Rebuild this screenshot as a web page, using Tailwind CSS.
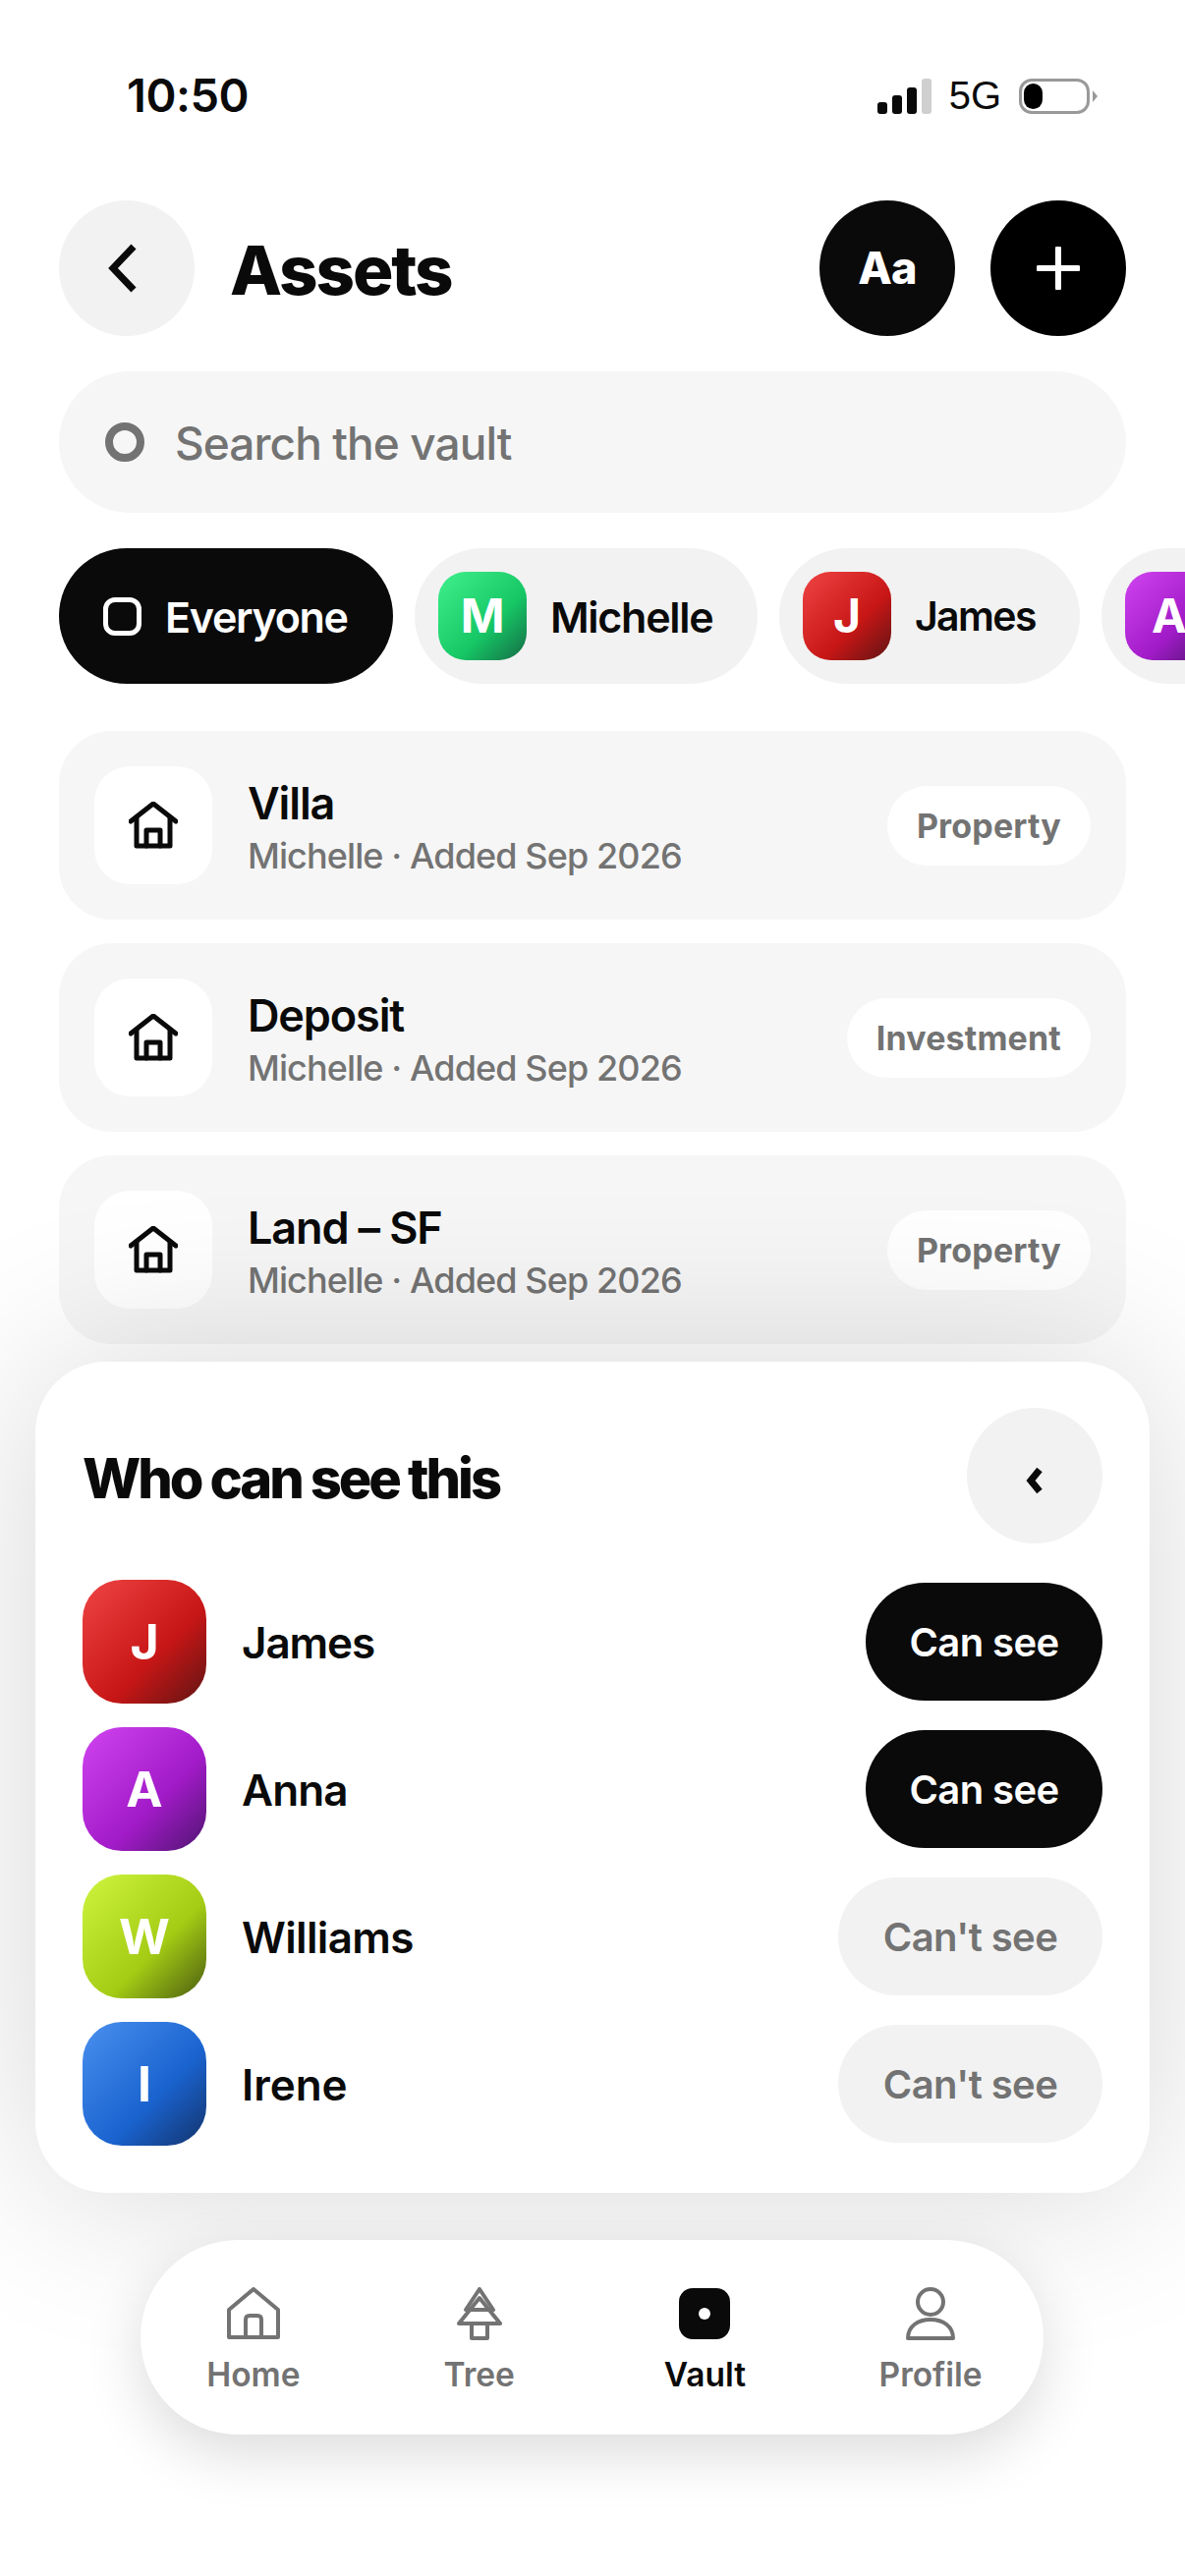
<!doctype html>
<html><head><meta charset="utf-8"><script src="https://cdn.jsdelivr.net/npm/@tailwindcss/browser@4"></script></head>
<body>
<div class="relative w-[1206px] h-[2622px] overflow-hidden bg-white font-['Inter',sans-serif] text-[#0a0a0a]">
  <div class="h-[204px] pt-[70px] pl-[129px] pr-[89px] flex justify-between items-start">
    <div class="text-[47px] leading-[54px] font-semibold tracking-[-0.01em]">10:50</div>
    <div class="flex items-end gap-[18px] h-[46px] pt-[8px]">
      <div class="flex items-end gap-[5px] h-[36px]">
        <div class="w-[10px] h-[12px] rounded-[3px] bg-[#0a0a0a]"></div>
        <div class="w-[10px] h-[19px] rounded-[3px] bg-[#0a0a0a]"></div>
        <div class="w-[10px] h-[27px] rounded-[3px] bg-[#0a0a0a]"></div>
        <div class="w-[10px] h-[36px] rounded-[3px] bg-[#cfcfcf]"></div>
      </div>
      <div class="text-[40px] leading-[38px] font-['Liberation_Sans',sans-serif]">5G</div>
      <div class="flex items-center gap-[3px]">
        <div class="w-[72px] h-[36px] rounded-[13px] border-[3px] border-[#999] p-[2px]"><div class="w-[19px] h-full rounded-[10px] bg-black"></div></div>
        <svg width="5" height="12" viewBox="0 0 5 12"><path d="M0 0L5 6L0 12Z" fill="#999"/></svg>
      </div>
    </div>
  </div>

  <div class="px-[60px] flex items-center h-[138px]">
    <div class="w-[138px] h-[138px] rounded-full bg-[#f2f2f2] flex items-center justify-center">
      <svg class="mr-[8px]" width="32" height="50" viewBox="0 0 32 50" fill="none"><path d="M27 3L6 25L27 47" stroke="#0a0a0a" stroke-width="7"/></svg>
    </div>
    <div class="ml-[36px] pt-[4px] text-[69px] font-extrabold tracking-[-0.03em] leading-none">Assets</div>
    <div class="ml-auto w-[138px] h-[138px] rounded-full bg-[#0a0a0a] text-white text-[45px] font-extrabold tracking-[-0.02em] flex items-center justify-center">Aa</div>
    <div class="ml-[36px] w-[138px] h-[138px] rounded-full bg-black flex items-center justify-center">
      <svg width="44" height="44" viewBox="0 0 44 44"><path d="M22 2V42M2 22H42" stroke="#fff" stroke-width="6" stroke-linecap="round"/></svg>
    </div>
  </div>

  <div class="mt-[36px] mx-[60px] h-[144px] rounded-full bg-[#f6f6f6] flex items-center pl-[47px]">
    <div class="w-[40px] h-[40px] rounded-full border-[8px] border-[#737373]"></div>
    <div class="ml-[31px] pt-[2px] text-[46px] font-medium text-[#737373] tracking-[-0.02em]">Search the vault</div>
  </div>

  <div class="mt-[36px] pl-[60px] flex gap-[22px] w-[1206px] overflow-hidden">
    <div class="shrink-0 w-[340px] h-[138px] rounded-full bg-[#0a0a0a] flex items-center pl-[45px]">
      <div class="w-[39px] h-[39px] rounded-[12px] border-[5px] border-white"></div>
      <div class="ml-[24px] pt-[2px] text-white text-[43px] font-semibold tracking-[-0.03em]">Everyone</div>
    </div>
    <div class="shrink-0 w-[349px] h-[138px] rounded-full bg-[#f2f2f2] flex items-center pl-[24px]">
      <div class="w-[90px] h-[90px] rounded-[28px] bg-[linear-gradient(135deg,#3ff08c,#16c765_60%,#156b45)] text-white text-[48px] font-bold flex items-center justify-center">M</div>
      <div class="ml-[24px] pt-[2px] text-[43px] font-semibold tracking-[-0.03em]">Michelle</div>
    </div>
    <div class="shrink-0 w-[306px] h-[138px] rounded-full bg-[#f2f2f2] flex items-center pl-[24px]">
      <div class="w-[90px] h-[90px] rounded-[28px] bg-[linear-gradient(135deg,#ef4444,#c81616_60%,#5f1414)] text-white text-[48px] font-bold flex items-center justify-center">J</div>
      <div class="ml-[24px] pt-[2px] text-[41px] font-semibold tracking-[-0.04em]">James</div>
    </div>
    <div class="shrink-0 w-[306px] h-[138px] rounded-full bg-[#f2f2f2] flex items-center pl-[24px]">
      <div class="w-[90px] h-[90px] rounded-[28px] bg-[linear-gradient(135deg,#d044f0,#a21bc8_60%,#4f1470)] text-white text-[48px] font-bold flex items-center justify-center">A</div>
      <div class="ml-[24px] pt-[2px] text-[43px] font-semibold tracking-[-0.03em]">Anna</div>
    </div>
  </div>

  <div class="mt-[48px] mx-[60px] flex flex-col gap-[24px]">
    <div class="h-[192px] rounded-[54px] bg-[#f6f6f6] flex items-center pl-[36px] pr-[36px]">
      <div class="w-[120px] h-[120px] rounded-[36px] bg-white flex items-center justify-center">
        <svg width="50" height="48" viewBox="0 0 50 48" fill="none" stroke="#0a0a0a" stroke-width="5" stroke-linecap="round" stroke-linejoin="round"><path d="M2 20L25 2L48 20"/><path d="M8 16V45H42V16"/><path d="M18 45V29H32V45"/></svg>
      </div>
      <div class="ml-[36px] pt-[5px] flex flex-col">
        <div class="text-[45px] leading-[54px] font-semibold tracking-[-0.025em]">Villa</div>
        <div class="text-[36px] leading-[46px] mt-[3px] font-medium text-[#737373] tracking-[-0.025em]">Michelle · Added Sep 2026</div>
      </div>
      <div class="ml-auto h-[81px] rounded-full bg-white px-[30px] flex items-center text-[34px] font-bold tracking-[0.005em] text-[#737373]">Property</div>
    </div>
    <div class="h-[192px] rounded-[54px] bg-[#f6f6f6] flex items-center pl-[36px] pr-[36px]">
      <div class="w-[120px] h-[120px] rounded-[36px] bg-white flex items-center justify-center">
        <svg width="50" height="48" viewBox="0 0 50 48" fill="none" stroke="#0a0a0a" stroke-width="5" stroke-linecap="round" stroke-linejoin="round"><path d="M2 20L25 2L48 20"/><path d="M8 16V45H42V16"/><path d="M18 45V29H32V45"/></svg>
      </div>
      <div class="ml-[36px] pt-[5px] flex flex-col">
        <div class="text-[45px] leading-[54px] font-semibold tracking-[-0.025em]">Deposit</div>
        <div class="text-[36px] leading-[46px] mt-[3px] font-medium text-[#737373] tracking-[-0.025em]">Michelle · Added Sep 2026</div>
      </div>
      <div class="ml-auto h-[81px] rounded-full bg-white px-[30px] flex items-center text-[34px] font-bold tracking-[0.005em] text-[#737373]">Investment</div>
    </div>
    <div class="h-[192px] rounded-[54px] bg-[#f6f6f6] flex items-center pl-[36px] pr-[36px]">
      <div class="w-[120px] h-[120px] rounded-[36px] bg-white flex items-center justify-center">
        <svg width="50" height="48" viewBox="0 0 50 48" fill="none" stroke="#0a0a0a" stroke-width="5" stroke-linecap="round" stroke-linejoin="round"><path d="M2 20L25 2L48 20"/><path d="M8 16V45H42V16"/><path d="M18 45V29H32V45"/></svg>
      </div>
      <div class="ml-[36px] pt-[5px] flex flex-col">
        <div class="text-[45px] leading-[54px] font-semibold tracking-[-0.025em]">Land – SF</div>
        <div class="text-[36px] leading-[46px] mt-[3px] font-medium text-[#737373] tracking-[-0.025em]">Michelle · Added Sep 2026</div>
      </div>
      <div class="ml-auto h-[81px] rounded-full bg-white px-[30px] flex items-center text-[34px] font-bold tracking-[0.005em] text-[#737373]">Property</div>
    </div>
  </div>

  <div class="relative mt-[18px] mx-[36px] h-[846px] rounded-[72px] bg-white shadow-[0_0_180px_rgba(0,0,0,0.16)] px-[48px] pt-[47px]">
    <div class="flex items-center justify-between h-[138px]">
      <div class="pt-[6px] text-[56px] font-extrabold tracking-[-0.055em]">Who can see this</div>
      <div class="w-[138px] h-[138px] rounded-full bg-[#f2f2f2] flex items-center justify-center">
        <svg class="mt-[9px]" width="18" height="30" viewBox="0 0 18 30" fill="none"><path d="M14 4L5 15L14 26" stroke="#0a0a0a" stroke-width="7"/></svg>
      </div>
    </div>
    <div class="mt-[37px] flex flex-col gap-[24px]">
      <div class="flex items-center h-[126px]">
        <div class="w-[126px] h-[126px] rounded-[40px] bg-[linear-gradient(135deg,#ef4444,#c81616_60%,#5f1414)] text-white text-[50px] font-bold flex items-center justify-center">J</div>
        <div class="ml-[36px] pt-[2px] text-[44px] font-semibold tracking-[-0.025em]">James</div>
        <div class="ml-auto pt-[2px] h-[120px] w-[241px] rounded-full bg-[#0a0a0a] text-white text-[40px] font-semibold tracking-[-0.015em] flex items-center justify-center">Can see</div>
      </div>
      <div class="flex items-center h-[126px]">
        <div class="w-[126px] h-[126px] rounded-[40px] bg-[linear-gradient(135deg,#d044f0,#a21bc8_60%,#4f1470)] text-white text-[50px] font-bold flex items-center justify-center">A</div>
        <div class="ml-[36px] pt-[2px] text-[44px] font-semibold tracking-[-0.02em]">Anna</div>
        <div class="ml-auto pt-[2px] h-[120px] w-[241px] rounded-full bg-[#0a0a0a] text-white text-[40px] font-semibold tracking-[-0.015em] flex items-center justify-center">Can see</div>
      </div>
      <div class="flex items-center h-[126px]">
        <div class="w-[126px] h-[126px] rounded-[40px] bg-[linear-gradient(135deg,#cff53f,#a4cc14_60%,#4a5c10)] text-white text-[50px] font-bold flex items-center justify-center">W</div>
        <div class="ml-[36px] pt-[2px] text-[44px] font-semibold tracking-[-0.015em]">Williams</div>
        <div class="ml-auto pt-[2px] h-[120px] w-[269px] rounded-full bg-[#f2f2f2] text-[#737373] text-[40px] font-semibold tracking-[-0.015em] flex items-center justify-center">Can't see</div>
      </div>
      <div class="flex items-center h-[126px]">
        <div class="w-[126px] h-[126px] rounded-[40px] bg-[linear-gradient(135deg,#4a90ef,#1a63cf_60%,#13336b)] text-white text-[50px] font-bold flex items-center justify-center">I</div>
        <div class="ml-[36px] pt-[2px] text-[44px] font-semibold">Irene</div>
        <div class="ml-auto pt-[2px] h-[120px] w-[269px] rounded-full bg-[#f2f2f2] text-[#737373] text-[40px] font-semibold tracking-[-0.015em] flex items-center justify-center">Can't see</div>
      </div>
    </div>
  </div>

  <div class="relative mt-[48px] ml-[143px] w-[919px] h-[198px] rounded-full bg-white shadow-[0_20px_60px_rgba(0,0,0,0.14)] grid grid-cols-4 items-start pt-[48px]">
    <div class="flex flex-col items-center">
      <svg width="56" height="54" viewBox="0 0 56 54" fill="none" stroke="#737373" stroke-width="4" stroke-linejoin="round"><path d="M3 23L28 2L53 23V51H3Z"/><path d="M20 51V33Q20 29 24 29H32Q36 29 36 33V51"/></svg>
      <div class="mt-[14px] text-[33.5px] leading-[42px] font-semibold text-[#737373]">Home</div>
    </div>
    <div class="flex flex-col items-center">
      <svg width="46" height="54" viewBox="0 0 46 54" fill="none" stroke="#737373" stroke-width="4" stroke-linejoin="round"><path d="M23 2L37 23H9Z"/><path d="M23 11L44 37H2Z"/><path d="M15 37V52H31V37"/></svg>
      <div class="mt-[14px] text-[33.5px] leading-[42px] font-semibold text-[#737373]">Tree</div>
    </div>
    <div class="flex flex-col items-center">
      <div class="mt-[1px] mb-[1px] w-[52px] h-[52px] rounded-[14px] bg-[#0a0a0a] flex items-center justify-center"><div class="w-[12px] h-[12px] rounded-full bg-white"></div></div>
      <div class="mt-[14px] text-[33.5px] leading-[42px] font-semibold text-[#0a0a0a]">Vault</div>
    </div>
    <div class="flex flex-col items-center">
      <svg width="52" height="54" viewBox="0 0 52 54" fill="none" stroke="#737373" stroke-width="4"><circle cx="26" cy="15" r="13"/><path d="M3 52C3 40 13 33 26 33C39 33 49 40 49 52Z" stroke-linejoin="round"/></svg>
      <div class="mt-[14px] text-[33.5px] leading-[42px] font-semibold text-[#737373]">Profile</div>
    </div>
  </div>
</div>
</body></html>
